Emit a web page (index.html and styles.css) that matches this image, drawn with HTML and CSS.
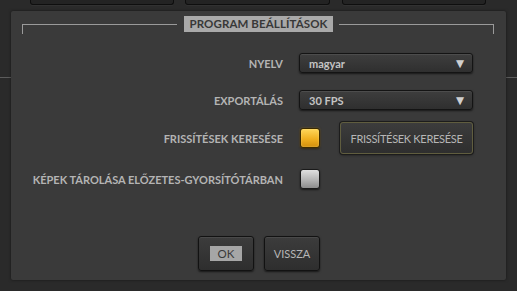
FILE: index.html
```html
<!DOCTYPE html>
<html lang="hu">
<head>
<meta charset="utf-8">
<title>Program beállítások</title>
<link rel="stylesheet" href="styles.css">
</head>
<body>
<div class="top-tabs">
  <div class="tab tab-1"></div>
  <div class="tab tab-2"></div>
  <div class="tab tab-3"></div>
</div>
<div class="panel">
  <div class="panel-head">
    <div class="bracket bracket-left"></div>
    <div class="panel-title">PROGRAM BEÁLLÍTÁSOK</div>
    <div class="bracket bracket-right"></div>
  </div>
  <div class="form">
    <div class="row row-lang">
      <div class="label">NYELV</div>
      <div class="select"><span class="select-value">magyar</span><span class="arrow">▼</span></div>
    </div>
    <div class="row row-export">
      <div class="label">EXPORTÁLÁS</div>
      <div class="select"><span class="select-value bold">30 FPS</span><span class="arrow">▼</span></div>
    </div>
    <div class="row row-update">
      <div class="label">FRISSÍTÉSEK KERESÉSE</div>
      <div class="check check-on"></div>
      <div class="btn btn-update">FRISSÍTÉSEK KERESÉSE</div>
    </div>
    <div class="row row-cache">
      <div class="label">KÉPEK TÁROLÁSA ELŐZETES-GYORSÍTÓTÁRBAN</div>
      <div class="check check-off"></div>
    </div>
  </div>
  <div class="footer">
    <div class="btn btn-foot"><span class="ok-focus">OK</span></div>
    <div class="btn btn-foot">VISSZA</div>
  </div>
</div>
</body>
</html>
```

FILE: styles.css
```css
html, body {
  margin: 0;
  padding: 0;
}
body {
  width: 517px;
  height: 291px;
  overflow: hidden;
  background-color: #2a2a2a;
  background-image: linear-gradient(to bottom, transparent 77px, #5c5c5c 77px, #5c5c5c 78px, transparent 78px);
  font-family: Lato, "Open Sans", sans-serif;
}
.top-tabs {
  display: flex;
  height: 5px;
  padding-left: 30px;
}
.tab {
  height: 4px;
  background: #232323;
  border: 1px solid #0e0e0e;
  border-top: none;
  border-radius: 0 0 3px 3px;
  box-shadow: 0 1px 1px rgba(255,255,255,0.04);
}
.tab-1 { width: 142px; }
.tab-2 { width: 143px; margin-left: 11px; }
.tab-3 { width: 142px; margin-left: 12px; }

.panel {
  margin: 6px 0 0 11px;
  width: 495px;
  height: 269px;
  background: #3a3a3a;
  border-radius: 2px;
  box-shadow: 0 0 3px rgba(0,0,0,0.5);
  display: flex;
  flex-direction: column;
}
.panel-head {
  display: flex;
  align-items: flex-start;
  padding: 5px 0 0 11px;
}
.bracket {
  width: 154px;
  height: 9px;
  margin-top: 8px;
  border-top: 1px solid #9a9a9a;
}
.bracket-left {
  border-left: 1px solid #9a9a9a;
  margin-right: 7px;
}
.bracket-right {
  border-right: 1px solid #9a9a9a;
  margin-left: 6px;
}
.panel-title {
  width: 149px;
  height: 16px;
  background: #a9a9a9;
  color: #383838;
  font-weight: 700;
  font-size: 11.5px;
  line-height: 16px;
  text-align: center;
  letter-spacing: 0.1px;
}

.form {
  display: flex;
  flex-direction: column;
  margin-top: 19px;
}
.row {
  display: flex;
  align-items: center;
}
.row-lang { height: 20px; }
.row-export { height: 20px; margin-top: 17px; }
.row-update { height: 32px; margin-top: 12px; }
.row-cache { height: 20px; margin-top: 15px; }

.label {
  width: 272px;
  margin-right: 16px;
  text-align: right;
  color: #b4b4b4;
  font-weight: 700;
  font-size: 11px;
  white-space: nowrap;
}
.select {
  height: 18px;
  border: 1px solid #141414;
  border-radius: 3px;
  background: linear-gradient(to bottom, #3e3e3e, #2f2f2f);
  box-shadow: inset 0 1px 0 rgba(255,255,255,0.08), 0 1px 2px rgba(0,0,0,0.6);
  display: flex;
  align-items: center;
  justify-content: space-between;
  padding: 0 8px 0 9px;
  box-sizing: content-box;
  width: 155px;
}
.select-value {
  color: #c4c4c4;
  font-size: 11px;
  font-weight: 700;
}
.arrow {
  color: #cfcfcf;
  font-family: "DejaVu Sans", sans-serif;
  font-size: 10.5px;
  line-height: 1;
}
.check {
  width: 18px;
  height: 18px;
  margin-left: 1px;
  border: 1px solid #1a1a1a;
  border-radius: 3px;
}
.check-on {
  background: linear-gradient(to bottom, #ffd75a, #f0b020 55%, #d08e0c);
  border-color: #3a2a00;
  box-shadow: inset 0 0 2px rgba(255,235,160,0.6), 0 0 2px rgba(200,140,20,0.5), 0 1px 2px rgba(0,0,0,0.6);
}
.check-off {
  background: linear-gradient(to bottom, #e0e0e0, #b4b4b4 55%, #8c8c8c);
  box-shadow: 0 1px 2px rgba(0,0,0,0.6);
}
.btn {
  display: flex;
  align-items: center;
  justify-content: center;
  background: linear-gradient(to bottom, #3c3c3c, #2e2e2e);
  border: 1px solid #121212;
  border-radius: 3px;
  box-shadow: inset 0 1px 0 rgba(255,255,255,0.07), 0 1px 2px rgba(0,0,0,0.6);
  color: #b6b6b6;
  font-size: 11px;
  box-sizing: border-box;
}
.btn-update {
  width: 133px;
  height: 32px;
  margin-left: 20px;
  letter-spacing: -0.3px;
  border-color: #605d3f;
  box-shadow: 0 0 0 1px #1c1c1c, 0 1px 3px rgba(0,0,0,0.6);
}
.footer {
  display: flex;
  justify-content: center;
  gap: 10px;
  margin-top: 47px;
  padding-left: 1px;
}
.btn-foot {
  width: 56px;
  height: 35px;
  font-size: 11px;
}
.ok-focus {
  width: 32px;
  height: 15px;
  line-height: 15px;
  text-align: center;
  background: #a6a6a6;
  color: #3a3a3a;
  font-size: 11.5px;
}
```
